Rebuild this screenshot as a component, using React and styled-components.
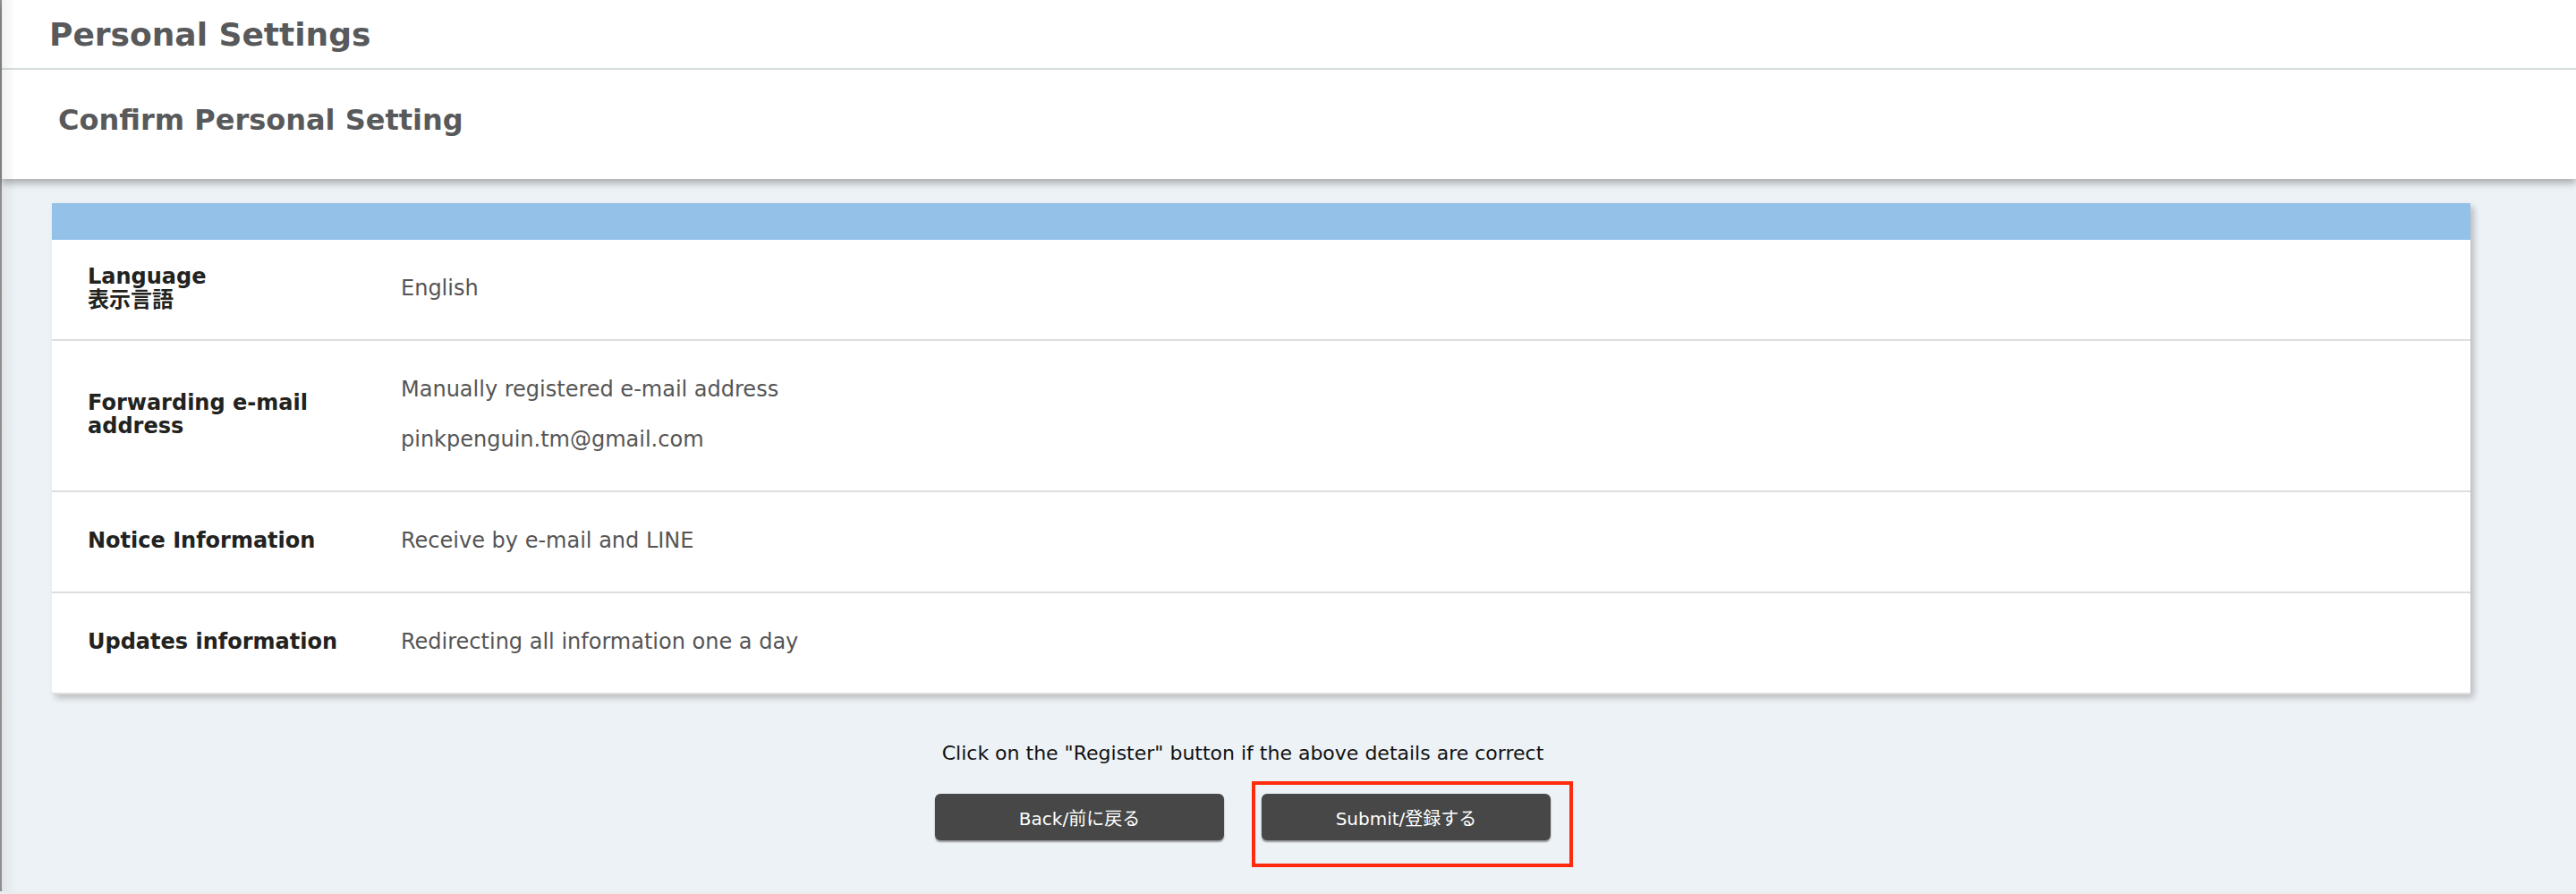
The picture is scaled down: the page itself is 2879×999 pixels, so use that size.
import styled, { createGlobalStyle } from "styled-components";

const GlobalStyle = createGlobalStyle`
    html, body {
        margin: 0;
        padding: 0;
        background: #ececec;
    }
    body {
        font-family: "DejaVu Sans", "Noto Sans CJK JP", sans-serif;
    }
`;

// Page frame

const Page = styled.div`
    position: relative;
    height: 996px;
    border-left: 2px solid #8e8e8e;
    background: #edf2f6;
    display: flex;
    flex-direction: column;

    &::before {
        content: "";
        position: absolute;
        top: 0;
        bottom: 0;
        left: 0;
        width: 16px;
        background: linear-gradient(to right, rgba(0, 0, 0, 0.06), rgba(0, 0, 0, 0));
        pointer-events: none;
        z-index: 3;
    }
`;

const HeaderPanel = styled.header`
    position: relative;
    z-index: 2;
    background: #fff;
    box-shadow: 0 5px 8px rgba(0, 0, 0, 0.28);
`;

const PageTitle = styled.h1`
    margin: 0;
    height: 76px;
    padding-left: 53px;
    display: flex;
    align-items: center;
    border-bottom: 2px solid #d6dddd;
    font-size: 36px;
    font-weight: 700;
    color: #58595b;
`;

const SubTitle = styled.h2`
    margin: 0;
    padding: 38px 0 47px 63px;
    font-size: 32px;
    font-weight: 700;
    line-height: 37px;
    color: #58595b;
`;

// Confirm card

const Card = styled.section`
    margin: 27px 118px 0 56px;
    background: #fff;
    box-shadow: 4px 4px 7px rgba(0, 0, 0, 0.22);
`;

const CardBar = styled.div`
    height: 41px;
    background: #94c1e8;
`;

const Row = styled.div`
    display: grid;
    grid-template-columns: 350px 1fr;
    align-items: center;
    padding: 26px 0 29px 40px;
    border-bottom: 2px solid #dedede;
`;

const Label = styled.div`
    font-size: 24px;
    font-weight: 700;
    line-height: 26px;
    color: #222220;
`;

const Values = styled.div`
    display: flex;
    flex-direction: column;
`;

const Value = styled.div`
    font-size: 24px;
    line-height: 56px;
    color: #555;
`;

// Actions under the card

const Actions = styled.div`
    margin: 53px 159px 0 56px;
    display: flex;
    flex-direction: column;
    align-items: center;
    gap: 32px;
`;

const Notice = styled.p`
    margin: 0;
    font-size: 22px;
    line-height: 26px;
    color: #111;
`;

const ButtonRow = styled.div`
    display: flex;
    gap: 42px;
`;

const ButtonWrap = styled.div`
    position: relative;
`;

const ActionButton = styled.button`
    width: 323px;
    height: 52px;
    border: none;
    border-radius: 6px;
    background: #464746;
    color: #fff;
    font-family: "DejaVu Sans", "Noto Sans CJK JP", sans-serif;
    font-size: 20px;
    box-shadow: 0 2px 2px rgba(0, 0, 0, 0.4);
    cursor: pointer;
`;

const Highlight = styled.div`
    position: absolute;
    left: -11px;
    top: -14px;
    width: 359px;
    height: 96px;
    box-sizing: border-box;
    border: 4px solid #fe2b0e;
    pointer-events: none;
`;

const rows = [
    { label: ["Language", "表示言語"], values: ["English"] },
    { label: ["Forwarding e-mail", "address"], values: ["Manually registered e-mail address", "pinkpenguin.tm@gmail.com"] },
    { label: ["Notice Information"], values: ["Receive by e-mail and LINE"] },
    { label: ["Updates information"], values: ["Redirecting all information one a day"] },
];

function App() {
    return (
        <>
            <GlobalStyle />
            <Page>
                <HeaderPanel>
                    <PageTitle>Personal Settings</PageTitle>
                    <SubTitle>Confirm Personal Setting</SubTitle>
                </HeaderPanel>

                <Card>
                    <CardBar />
                    {rows.map((row) => (
                        <Row key={row.label[0]}>
                            <Label>
                                {row.label.map((line) => (
                                    <div key={line}>{line}</div>
                                ))}
                            </Label>
                            <Values>
                                {row.values.map((v) => (
                                    <Value key={v}>{v}</Value>
                                ))}
                            </Values>
                        </Row>
                    ))}
                </Card>

                <Actions>
                    <Notice>Click on the "Register" button if the above details are correct</Notice>
                    <ButtonRow>
                        <ButtonWrap>
                            <ActionButton type="button">Back/前に戻る</ActionButton>
                        </ButtonWrap>
                        <ButtonWrap>
                            <ActionButton type="submit">Submit/登録する</ActionButton>
                            <Highlight />
                        </ButtonWrap>
                    </ButtonRow>
                </Actions>
            </Page>
        </>
    );
}

export default App;
